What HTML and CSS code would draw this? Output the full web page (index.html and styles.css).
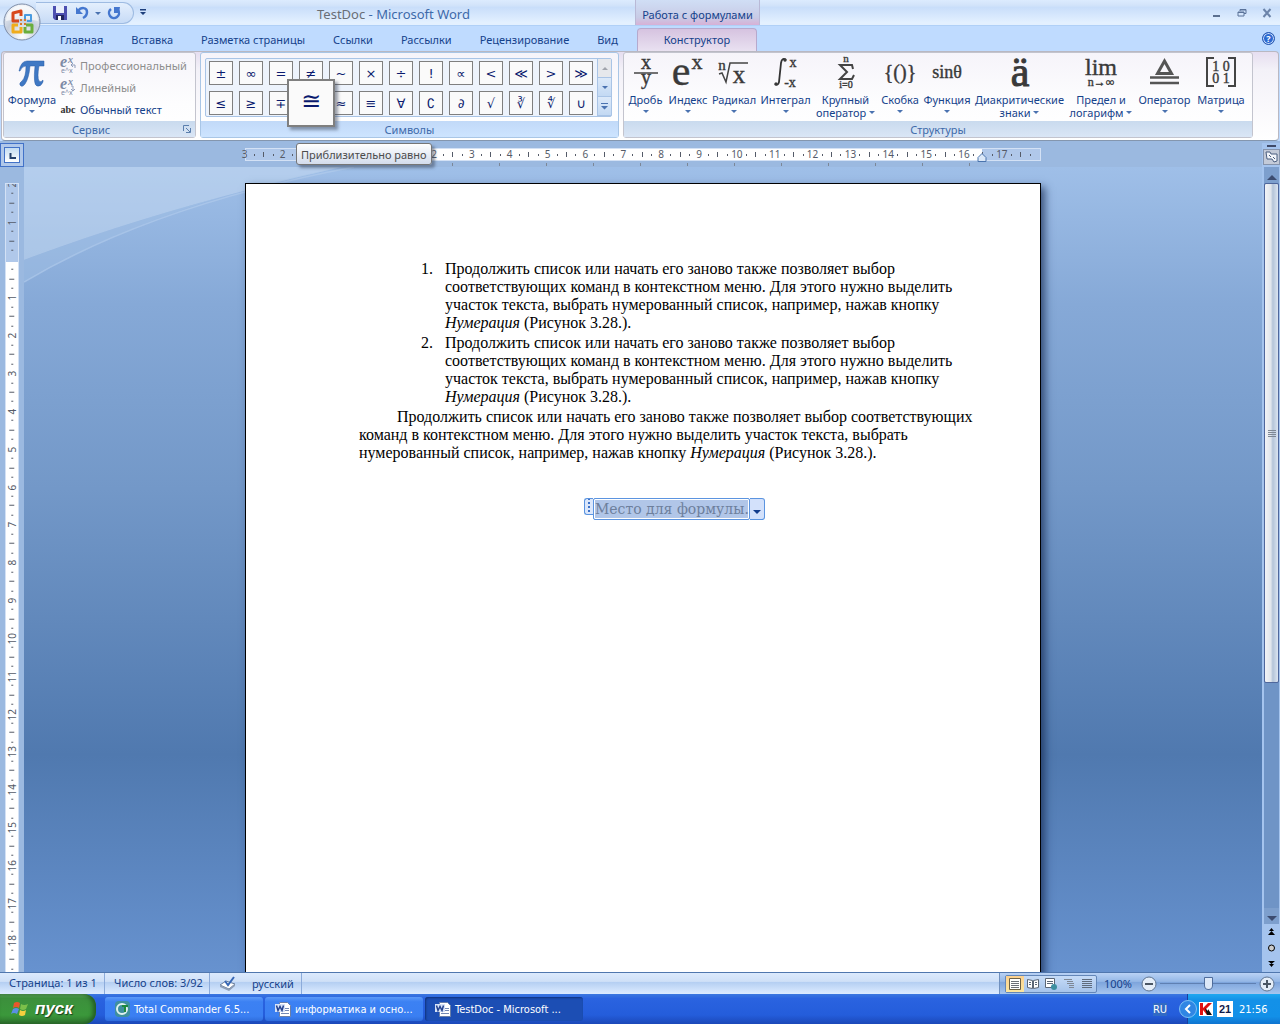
FILE: index.html
```html
<!DOCTYPE html>
<html lang="ru">
<head>
    <meta charset="UTF-8">
    <title>TestDoc - Microsoft Word</title>
    <link rel="stylesheet" href="styles.css">
</head>
<body>
<button class="office-button" aria-label="Office">
    <svg width="38" height="38" viewBox="0 0 38 38">
        <defs>
            <radialGradient id="orb" cx="50%" cy="90%" r="90%">
                <stop offset="0" stop-color="#ffffff"/>
                <stop offset="0.5" stop-color="#c5cedc"/>
                <stop offset="1" stop-color="#f6f8fb"/>
            </radialGradient>
        </defs>
        <circle cx="19" cy="19" r="18" fill="url(#orb)" stroke="#7d8da8"/>
        <path d="M3 18a16 15 0 0 1 32 0q-16-4-32 0z" fill="#fff" opacity=".6"/>
        <g fill="none" stroke-width="3" stroke-linejoin="round">
            <path d="M16 18h-6v-8l8-2v5" stroke="#d8481c"/>
            <path d="M22 18v-6h6v6h-4" stroke="#4a9be0" stroke-width="2"/>
            <path d="M15 22h-5v7h8v-5" stroke="#f0ac1c"/>
            <path d="M23 22h6v7h-7v-5" stroke="#6aae3c"/>
        </g>
        <path d="M17 16h2v2h-2zM21 16h2v2h-2zM17 20h2v2h-2zM21 20h2v2h-2z" fill="#d9792a"/>
    </svg>
</button>

<header class="titlebar">
    <div class="quick-access">
        <button aria-label="Сохранить">
            <svg width="14" height="14" viewBox="0 0 14 14"><path d="M0 0h14v14H2l-2-2z" fill="#4c4fb0"/><path d="M3 0h8v7H3z" fill="#e9eefb"/><path d="M3 9h8v5H3z" fill="#20255e"/><path d="M5 10h3v4H5z" fill="#fff"/></svg>
        </button>
        <button aria-label="Отменить">
            <svg width="14" height="14" viewBox="0 0 14 14"><path d="M1 1v7h7z" fill="#4577cf"/><path d="M3 5C6 1 12 1 12 6q0 4-4 6" fill="none" stroke="#4577cf" stroke-width="2.500"/></svg>
        </button>
        <i class="arrow"></i>
        <button aria-label="Повторить">
            <svg width="14" height="14" viewBox="0 0 14 14"><path d="M4 3a5 5 0 1 0 7 1" fill="none" stroke="#4577cf" stroke-width="2.500"/><path d="M7 1h6l-1 6H7z" fill="#4577cf"/></svg>
        </button>
    </div>
    <button class="customize" aria-label="Настройка панели">
        <svg width="6" height="7" viewBox="0 0 6 7"><path d="M0 0h6v1.500H0zM0 3h6L3 6z" fill="#1e3f7c"/></svg>
    </button>
    <h1><span>TestDoc</span> - Microsoft Word</h1>
    <div class="context-title">Работа с формулами</div>
    <div class="window-buttons">
        <button aria-label="Свернуть"><svg width="10" height="10" viewBox="0 0 10 10"><path d="M1 7h7v2H1z" fill="#5b6f8f"/></svg></button>
        <button aria-label="Восстановить"><svg width="10" height="10" viewBox="0 0 10 10"><path d="M3 3V1.500h6v4H7M1 4h6v4H1zM1 4.500h6M3 2h6" fill="none" stroke="#5b7299"/></svg></button>
        <button aria-label="Закрыть"><svg width="10" height="10" viewBox="0 0 10 10"><path d="M1.500 1l7 8M8.500 1l-7 8" stroke="#6c84aa" stroke-width="2"/></svg></button>
    </div>
</header>

<nav class="tabs">
    <button>Главная</button>
    <button>Вставка</button>
    <button>Разметка страницы</button>
    <button>Ссылки</button>
    <button>Рассылки</button>
    <button>Рецензирование</button>
    <button>Вид</button>
    <button class="active">Конструктор</button>
    <button class="help" aria-label="Справка">?</button>
</nav>

<section class="ribbon">
    <div class="group tools">
        <div class="group-body">
            <button class="big">
                <svg width="34" height="34" viewBox="0 0 34 34"><path d="M4 15Q6 5 12 5h17v5h-5q-2 11 0 15 2 2 4-1v2q-2 5-6 4-4-1-2-20h-5q-1 12-5 18-3 4-5 1-1-2 2-4 4-4 4-15-4 0-6 5z" fill="#3f78c4" stroke="#2b5ca4" stroke-width=".5"/></svg>
                <span>Формула</span>
                <i class="arrow"></i>
            </button>
            <div class="modes">
                <button disabled><svg width="16" height="18" viewBox="0 0 16 18"><text x="0" y="11" class="ex">e</text><text x="8" y="7" class="ex-sup">x</text><text x="1" y="17" class="ex-line">e^x</text><path d="M15 12V9h-4l2-2m-2 2l2 2" fill="none" stroke="#8f9dbb"/></svg>Профессиональный</button>
                <button disabled><svg width="16" height="18" viewBox="0 0 16 18"><text x="0" y="11" class="ex">e</text><text x="8" y="7" class="ex-sup">x</text><text x="1" y="17" class="ex-line">e^x</text><path d="M11 8h2v5m-2-2l2 2 2-2" fill="none" stroke="#8f9dbb"/></svg>Линейный</button>
                <button><b>abc</b>Обычный текст</button>
            </div>
        </div>
        <h2>Сервис<svg width="8" height="8" viewBox="0 0 8 8"><path d="M.5 6V.5H6M3 3l4 4M7.500 3v4.500H3" fill="none" stroke="#5b7fae"/></svg></h2>
    </div>

    <div class="group symbols">
        <div class="group-body">
            <div class="gallery">
                <div class="cells">
                    <button>±</button><button>∞</button><button>=</button><button>≠</button><button>~</button><button>×</button><button>÷</button><button>!</button><button>∝</button><button>&lt;</button><button>≪</button><button>&gt;</button><button>≫</button>
                    <button>≤</button><button>≥</button><button>∓</button><button class="hovered"><span>≅</span></button><button>≈</button><button>≡</button><button>∀</button><button>∁</button><button>∂</button><button>√</button><button>∛</button><button>∜</button><button>∪</button>
                </div>
                <div class="gallery-scroll">
                    <button disabled aria-label="Вверх"><i class="arrow up"></i></button>
                    <button aria-label="Вниз"><i class="arrow"></i></button>
                    <button aria-label="Ещё"><svg width="7" height="7" viewBox="0 0 7 7"><path d="M0 0h7v1H0zM0 3h7L3.500 6.500z" fill="#4a72b0"/></svg></button>
                </div>
            </div>
        </div>
        <h2>Символы</h2>
        <div class="tooltip" role="tooltip">Приблизительно равно</div>
    </div>

    <div class="group structures">
        <div class="group-body">
            <button class="big">
                <svg width="36" height="34" viewBox="0 0 36 34"><text x="18" y="13" font-size="20">x</text><path d="M6 17h24" stroke="#444" stroke-width="1.500"/><text x="18" y="28" font-size="20">y</text></svg>
                <span>Дробь</span><i class="arrow"></i>
            </button>
            <button class="big">
                <svg width="36" height="34" viewBox="0 0 36 34"><text x="11" y="29" font-size="42">e</text><text x="27" y="13" font-size="22">x</text></svg>
                <span>Индекс</span><i class="arrow"></i>
            </button>
            <button class="big">
                <svg width="36" height="34" viewBox="0 0 36 34"><text x="6" y="14" font-size="15">n</text><text x="23" y="27" font-size="25">x</text><path d="M3 18l3-1 4 9 4-19h18" fill="none" stroke="#444" stroke-width="1.500"/></svg>
                <span>Радикал</span><i class="arrow"></i>
            </button>
            <button class="big">
                <svg width="36" height="34" viewBox="0 0 36 34"><path d="M18 4q-4-3-5 3l-2 19q-1 4-4 2" fill="none" stroke="#333" stroke-width="1.800"/><circle cx="17" cy="4" r="1.500"/><circle cx="8" cy="28" r="1.500"/><text x="25" y="11" font-size="14">x</text><text x="22" y="31" font-size="14">-x</text></svg>
                <span>Интеграл</span><i class="arrow"></i>
            </button>
            <button class="big">
                <svg width="36" height="34" viewBox="0 0 36 34"><text x="18" y="6" font-size="11">n</text><path d="M25 13l-1-4H12l7 7-7 7h12l2-4" fill="none" stroke="#444" stroke-width="2"/><text x="18" y="32" font-size="10">i=0</text></svg>
                <span>Крупный<br>оператор <i class="arrow"></i></span>
            </button>
            <button class="big">
                <svg width="36" height="34" viewBox="0 0 36 34"><text x="18" y="23" font-size="20">{()}</text></svg>
                <span>Скобка</span><i class="arrow"></i>
            </button>
            <button class="big">
                <svg width="36" height="34" viewBox="0 0 36 34"><text x="18" y="22" font-size="18">sinθ</text></svg>
                <span>Функция</span><i class="arrow"></i>
            </button>
            <button class="big">
                <svg width="36" height="34" viewBox="0 0 36 34"><text x="18" y="30" font-size="42" stroke-width="1">ä</text></svg>
                <span>Диакритические<br>знаки <i class="arrow"></i></span>
            </button>
            <button class="big">
                <svg width="36" height="34" viewBox="0 0 36 34"><text x="18" y="19" font-size="24">lim</text><text x="18" y="30" font-size="12">n→∞</text></svg>
                <span>Предел и<br>логарифм <i class="arrow"></i></span>
            </button>
            <button class="big">
                <svg width="36" height="34" viewBox="0 0 36 34"><path d="M17.500 5l7 12.500h-14z" fill="none" stroke="#555" stroke-width="3"/><path d="M3 21.500h29M3 27h29" stroke="#555" stroke-width="2.500"/></svg>
                <span>Оператор</span><i class="arrow"></i>
            </button>
            <button class="big">
                <svg width="36" height="34" viewBox="0 0 36 34"><path d="M11 2H4v28h7M25 2h7v28h-7" fill="none" stroke="#444" stroke-width="2"/><text x="18" y="15" font-size="14">1 0</text><text x="18" y="27" font-size="14">0 1</text></svg>
                <span>Матрица</span><i class="arrow"></i>
            </button>
        </div>
        <h2>Структуры</h2>
    </div>
</section>

<div class="ruler-row">
    <button class="tab-selector" aria-label="Позиция табуляции"><svg width="14" height="14" viewBox="0 0 14 14"><path d="M5.500 5v5H11" fill="none" stroke="#24406b" stroke-width="2"/></svg></button>
    <div class="ruler-area">
        <div class="h-ruler">
            <div class="h-white"></div>
            <div class="h-marks" id="h-marks"></div>
            <svg class="indent" width="10" height="9" viewBox="0 0 10 9"><path d="M5 .5l4 4v4H1v-4z" fill="#dbe8f8" stroke="#4a74ae"/></svg>
        </div>
    </div>
    <div class="ruler-end">
        <div class="split"></div>
        <button aria-label="Линейка"><svg width="14" height="12" viewBox="0 0 14 12"><path d="M1 1h4l1 2h6v7l-3 1-2-3H2z" fill="#f2f5fa" stroke="#4b5f80"/><path d="M4 4l2 2M8 6l2 2" stroke="#4b5f80"/></svg></button>
    </div>
</div>

<main class="workspace">
    <div class="v-side">
        <div class="v-ruler">
            <div class="v-marks" id="v-marks"></div>
        </div>
    </div>
    <div class="canvas">
        <svg class="wave" width="340" height="116" viewBox="0 0 340 116">
            <path d="M0 0H318Q140 40 0 93z" fill="#cfe1f5" opacity=".45"/>
            <path d="M318 0Q140 40 0 93V115Q130 38 318 0z" fill="#a4c3e6" opacity=".4"/>
            <path d="M0 115Q130 38 330 0" fill="none" stroke="#b4cdec" stroke-width="1.500" opacity=".6"/>
        </svg>
        <article class="sheet">
            <ol>
                <li><div>Продолжить список или начать его заново также позволяет выбор<br>соответствующих команд в контекстном меню. Для этого нужно выделить<br>участок текста, выбрать нумерованный список, например, нажав кнопку<br><em>Нумерация</em> (Рисунок 3.28.).</div></li>
                <li><div>Продолжить список или начать его заново также позволяет выбор<br>соответствующих команд в контекстном меню. Для этого нужно выделить<br>участок текста, выбрать нумерованный список, например, нажав кнопку<br><em>Нумерация</em> (Рисунок 3.28.).</div></li>
            </ol>
            <p>Продолжить список или начать его заново также позволяет выбор соответствующих<br>команд в контекстном меню. Для этого нужно выделить участок текста, выбрать<br>нумерованный список, например, нажав кнопку <em>Нумерация</em> (Рисунок 3.28.).</p>
            <div class="formula">
                <span class="grip"></span>
                <input type="text" value="Место для формулы." aria-label="Формула">
                <button aria-label="Параметры формулы"><i class="arrow"></i></button>
            </div>
        </article>
    </div>
    <div class="scrollbar">
        <button aria-label="Вверх"><i class="arrow up"></i></button>
        <div class="track"><div class="thumb"></div></div>
        <button aria-label="Вниз"><i class="arrow"></i></button>
        <button class="browse" aria-label="Предыдущая страница"><svg width="7" height="8" viewBox="0 0 7 8"><path d="M3.500 0L6 3H1zM3.500 3L7 7H0z"/></svg></button>
        <button class="browse" aria-label="Выбор объекта"><svg width="7" height="8" viewBox="0 0 7 8"><circle cx="3.500" cy="4" r="3" fill="#ccc" stroke="#000"/></svg></button>
        <button class="browse" aria-label="Следующая страница"><svg width="7" height="8" viewBox="0 0 7 8"><path d="M0 1h7L3.500 4zM1 4h5L3.500 7z"/></svg></button>
    </div>
</main>

<footer class="status">
    <span class="pages">Страница: 1 из 1</span>
    <span class="words">Число слов: 3/92</span>
    <span class="lang">
        <svg width="17" height="15" viewBox="0 0 17 15"><path d="M1 9l6-4 9 3-6 5z" fill="#fff" stroke="#6b7f9d"/><path d="M1 9v2l9 4 6-5V8l-6 5z" fill="#8d9db5"/><path d="M6 5l3 4 6-8" fill="none" stroke="#3767b5" stroke-width="2"/></svg>
        русский
    </span>
    <div class="status-right">
        <div class="views">
            <button class="active" aria-label="Разметка страницы"><svg width="12" height="12" viewBox="0 0 12 12"><path d="M.5.500h11v11H.5z" fill="#fff" stroke="#6b6146"/><path d="M2 3.500h8M2 5.500h8M2 7.500h8M2 9.500h8" stroke="#6b6f78"/></svg></button>
            <button aria-label="Режим чтения"><svg width="12" height="12" viewBox="0 0 12 12"><path d="M.5 1.500l5 1v8l-5-1zM11.500 1.500l-5 1v8l5-1z" fill="#fff" stroke="#5b6675"/><path d="M2 4.500h2M2 6.500h2M8 4.500h2M8 6.500h2" stroke="#5b6675"/></svg></button>
            <button aria-label="Веб-документ"><svg width="12" height="12" viewBox="0 0 12 12"><path d="M.5.500h9v9h-9z" fill="#fff" stroke="#5b6675"/><path d="M2 3.500h6M2 5.500h6" stroke="#5b6675"/><circle cx="9" cy="9" r="3" fill="#3d8fa0"/></svg></button>
            <button aria-label="Структура"><svg width="12" height="12" viewBox="0 0 12 12"><path d="M1 1.500h8M4 3.500h6M4 5.500h7M6 7.500h5M6 9.500h5" stroke="#7e8794"/></svg></button>
            <button aria-label="Черновик"><svg width="12" height="12" viewBox="0 0 12 12"><path d="M1 1.500h10M1 3.500h10M1 5.500h10M1 7.500h10M1 9.500h10" stroke="#5f6b7c"/></svg></button>
        </div>
        <label for="zoom">100%</label>
        <button class="round" aria-label="Уменьшить"><svg width="16" height="16" viewBox="0 0 16 16"><circle cx="8" cy="8" r="7" fill="#e4edf8" stroke="#5f7491"/><path d="M4 8h8" stroke="#4a5664" stroke-width="2"/></svg></button>
        <input type="range" id="zoom" min="0" max="200" value="100">
        <button class="round" aria-label="Увеличить"><svg width="16" height="16" viewBox="0 0 16 16"><circle cx="8" cy="8" r="7" fill="#e4edf8" stroke="#5f7491"/><path d="M4 8h8M8 4v8" stroke="#4a5664" stroke-width="2"/></svg></button>
    </div>
</footer>

<div class="taskbar">
    <button class="start">
        <svg width="18" height="18" viewBox="0 0 18 18"><path d="M3 3q3-2 6 0L8 8Q5 6 2 8z" fill="#e8572c"/><path d="M10 4q3 2 7 0l-2 5q-3 2-6 0z" fill="#7cc04a"/><path d="M2 9q3-2 6 0l-2 5q-3-2-6 0z" fill="#5a8fe6"/><path d="M9 10q3 2 6 0l-1 5q-3 2-6 0z" fill="#f6cf3e"/></svg>
        пуск
    </button>
    <button class="task">
        <svg width="15" height="16" viewBox="0 0 15 16"><rect width="15" height="16" rx="4" fill="#3f8f9e"/><circle cx="7" cy="8" r="5" fill="none" stroke="#dff2ee" stroke-width="2"/><path d="M7 5h6M10 5v6" stroke="#1f8a3c" stroke-width="2"/></svg>
        Total Commander 6.5...
    </button>
    <button class="task">
        <svg width="16" height="16" viewBox="0 0 16 16"><path d="M4.500 1.500h8l3 3v11h-11z" fill="#fff" stroke="#6a7fa8"/><path d="M10 7.500h4M10 9.500h4M6 12.500h8" stroke="#7389b5"/><path d="M0 3h10v8H0z" fill="#d6e2f8"/><path d="M1.500 4.500l1.500 5 2-4 2 4 1.500-5" fill="none" stroke="#23418f" stroke-width="1.500"/></svg>
        информатика и осно...
    </button>
    <button class="task active">
        <svg width="16" height="16" viewBox="0 0 16 16"><path d="M4.500 1.500h8l3 3v11h-11z" fill="#fff" stroke="#6a7fa8"/><path d="M10 7.500h4M10 9.500h4M6 12.500h8" stroke="#7389b5"/><path d="M0 3h10v8H0z" fill="#d6e2f8"/><path d="M1.500 4.500l1.500 5 2-4 2 4 1.500-5" fill="none" stroke="#23418f" stroke-width="1.500"/></svg>
        TestDoc - Microsoft ...
    </button>
    <span class="keyboard">RU</span>
    <div class="tray">
        <button class="expand" aria-label="Показать значки"><svg width="18" height="18" viewBox="0 0 18 18"><circle cx="9" cy="9" r="8.500" fill="#2f86e4" stroke="#7cc0f4"/><path d="M11 5L7 9l4 4" fill="none" stroke="#fff" stroke-width="2"/></svg></button>
        <svg width="14" height="14" viewBox="0 0 14 14"><path d="M0 0h14v14H0z" fill="#fff"/><path d="M1 1h3v5l5-5h4L7 7l4 6H8L4 8v5H1z" fill="#e01010"/><path d="M6 6l3 3V7l4 6H8z" fill="#111"/></svg>
        <span class="date">21</span>
        <time>21:56</time>
    </div>
</div>

<script>
    // four marks per centimetre: number, dot, line, dot
    function drawMarks(id, from, count) {
        const box = document.getElementById(id);
        for (let i = 0; i < count * 4; i++) {
            const mark = document.createElement('span');
            const cm = Math.abs(from + i / 4);
            if (i % 4 === 0) {
                mark.textContent = cm === 0 ? '' : cm;
            } else {
                mark.className = i % 4 === 2 ? 'line' : 'dot';
            }
            box.appendChild(mark);
        }
    }

    drawMarks('h-marks', -3, 21);
    drawMarks('v-marks', -2, 28);
</script>
</body>
</html>
```
FILE: styles.css
```css
* {
    box-sizing: border-box;
}

body {
    display: flex;
    flex-direction: column;
    height: 100vh;
    margin: 0;
    overflow: hidden;
    position: relative;
    background: #bfdbff;
    color: #15428b;
    font-family: "Noto Sans", "Open Sans", sans-serif;
    font-size: 11px;
    line-height: 13px;
}

button {
    margin: 0;
    padding: 0;
    border: 0;
    background: none;
    color: inherit;
    font: inherit;
    white-space: nowrap;
}

svg {
    display: block;
    flex: none;
    overflow: visible;
}

h1, h2 {
    margin: 0;
    font-weight: normal;
}

.arrow {
    display: inline-block;
    flex: none;
    width: 0;
    height: 0;
    border: 3px solid transparent;
    border-top-color: #4a72b0;
    border-bottom: 0;
}

.arrow.up {
    border-top: 0;
    border-bottom: 3px solid #a0a4ac;
}

/* title */
.office-button {
    position: absolute;
    left: 3px;
    top: 3px;
    z-index: 2;
}

.titlebar {
    display: flex;
    flex: none;
    height: 26px;
    background: linear-gradient(#dcebfe 0, #d3e4fa 20%, #c9defa 30%, #e3f0ff 90%);
    border-bottom: 1px solid #b0d0f7;
}

.quick-access {
    display: flex;
    align-items: center;
    gap: 6px;
    width: 98px;
    height: 22px;
    margin: 2px 0 0 36px;
    padding-left: 17px;
    border: 1px solid #9ebbe2;
    border-left: 0;
    border-radius: 0 11px 11px 0;
    background: linear-gradient(#e4effd, #c7dbf6);
}

.quick-access button:first-child {
    margin-right: 2px;
}

.customize {
    width: 18px;
    padding-left: 6px;
}

.titlebar h1 {
    flex: 0 0 483px;
    color: #3e6aaa;
    font-size: 13px;
    line-height: 28px;
    text-align: center;
}

.titlebar h1 span {
    color: #696e76;
}

.context-title {
    width: 125px;
    border: solid #b9b9d6;
    border-width: 0 1px;
    background: linear-gradient(#d0def5, #c8cbe6 70%, #d7b1d6);
    line-height: 30px;
    text-align: center;
}

.window-buttons {
    display: flex;
    align-items: center;
    gap: 15px;
    margin-left: auto;
    padding-right: 8px;
}

/* tabs */
.tabs {
    display: flex;
    flex: none;
    height: 25px;
    padding-left: 46px;
    line-height: 28px;
}

.tabs button {
    padding: 0 14px;
}

.tabs .active {
    width: 120px;
    height: 23px;
    margin: 2px 0 0 5px;
    border: 1px solid #b6a9cd;
    border-bottom: 0;
    border-radius: 4px 4px 0 0;
    background: linear-gradient(#d6c3e0, #e9e1f1);
    line-height: 22px;
}

.tabs .help {
    width: 13px;
    height: 13px;
    margin: 6px 5px 0 auto;
    padding: 0;
    border: 1px solid #2858b0;
    border-radius: 50%;
    background: #2c68d0;
    box-shadow: inset 0 0 0 1px #c5dafa;
    color: #fff;
    font-weight: bold;
    font-size: 9px;
    line-height: 11px;
}

/* ribbon */
.ribbon {
    display: flex;
    flex: none;
    gap: 4px;
    height: 90px;
    margin: 0 1px;
    padding: 0 2px 2px 1px;
    border: 1px solid #b9b8c2;
    border-bottom: 1px solid #8496ae;
    border-radius: 4px;
    background: linear-gradient(#e6def0, #f3f1f8 20%, #fff);
}

.group {
    display: flex;
    flex-direction: column;
    border: 1px solid #c3c4ce;
    border-radius: 3px;
    background: linear-gradient(#f6f4fa, #fdfdfe 60%, #fff);
}

.group h2 {
    height: 16px;
    margin-top: auto;
    background: linear-gradient(#c9daee, #dae6f6);
    color: #3e6aaa;
    font-size: 11px;
    line-height: 17px;
    text-align: center;
}

.tools {
    width: 193px;
}

.tools .group-body {
    display: flex;
}

.tools .big {
    width: 56px;
}

.tools h2 {
    display: flex;
    align-items: center;
    padding: 0 4px 0 68px;
}

.tools h2 svg {
    margin-left: auto;
}

.modes {
    display: flex;
    flex-direction: column;
    padding-top: 1px;
}

.modes button {
    display: flex;
    align-items: center;
    gap: 4px;
    height: 22px;
}

.modes button:disabled {
    color: #8d8d8d;
}

.modes b {
    width: 16px;
    color: #333;
    font-family: "Liberation Serif", serif;
    font-size: 10px;
}

.ex, .ex-sup {
    fill: #7e8aa6;
    font: italic bold 16px "Liberation Serif", serif;
}

.ex-sup {
    font-size: 10px;
}

.ex-line {
    fill: #7e8aa6;
    font-size: 7px;
}

.big {
    display: flex;
    flex-direction: column;
    align-items: center;
    height: 68px;
    padding-top: 3px;
}

.big > span {
    margin-top: 3px;
}

.big > .arrow {
    margin-top: 4px;
}

.big span .arrow {
    margin-bottom: 3px;
}

.symbols {
    position: relative;
    width: 419px;
    border-color: #a9c6e6;
}

.symbols h2 {
    background: linear-gradient(#c1d9f8, #cde4ff);
}

.gallery {
    display: flex;
    width: 407px;
    height: 59px;
    margin: 5px 0 0 4px;
    border: 1px solid #a9c4e6;
    border-radius: 2px;
    background: #edf3fc;
}

.cells {
    display: grid;
    grid-template-columns: repeat(13, 24px);
    grid-auto-rows: 24px;
    gap: 6px;
    flex: 1;
    padding: 2px 3px;
}

.cells button {
    position: relative;
    border: 1px solid #7f7f7f;
    background: #fafafa;
    color: #0a1a6e;
    font-family: "DejaVu Sans", sans-serif;
    font-size: 13px;
}

.cells .hovered span {
    position: absolute;
    left: -13px;
    top: -13px;
    z-index: 2;
    width: 48px;
    height: 48px;
    border: 2px solid #7f7f7f;
    background: #fafafa;
    box-shadow: 3px 3px 3px rgba(60, 70, 90, .5);
    font-size: 24px;
    line-height: 40px;
}

.gallery-scroll {
    display: grid;
    grid-template-rows: repeat(3, 1fr);
    width: 14px;
}

.gallery-scroll button {
    display: flex;
    align-items: center;
    justify-content: center;
    border: solid #a9c4e6;
    border-width: 0 0 1px 1px;
    background: linear-gradient(#dce9f9, #c3d9f3);
}

.gallery-scroll button:disabled {
    background: #e6e8ec;
}

.tooltip {
    position: absolute;
    left: 95px;
    top: 90px;
    z-index: 3;
    height: 22px;
    padding: 0 4px;
    border: 1px solid #767676;
    border-radius: 3px;
    background: linear-gradient(#fff, #d3dcec);
    box-shadow: 3px 3px 3px rgba(60, 70, 90, .5);
    color: #4c4c4c;
    line-height: 22px;
    white-space: nowrap;
}

.structures {
    width: 630px;
}

.structures .group-body {
    display: grid;
    grid-template-columns: 41px 44px 48px 55px 65px 44px 50px 95px 68px 59px 54px;
    padding-left: 1px;
}

.structures svg {
    fill: #3a3a3a;
    stroke: #3a3a3a;
    stroke-width: .4px;
    font-family: "Liberation Serif", serif;
    text-anchor: middle;
}

/* rulers */
.ruler-row {
    display: flex;
    flex: none;
    height: 26px;
    padding-top: 2px;
    background: #9bb9e0;
}

.tab-selector {
    width: 24px;
    height: 24px;
    padding: 4px;
    border: 1px solid #4272c8;
    background: #b0c8ea;
}

.tab-selector svg {
    background: linear-gradient(#c4dcf2, #fff);
    outline: 1px solid #4272c8;
}

.ruler-area {
    display: flex;
    justify-content: center;
    flex: 1;
    padding-top: 5px;
}

.h-ruler {
    position: relative;
    width: 796px;
    height: 13px;
    border: 1px solid #d3e1f5;
    background: #b0c8ea;
    color: #555b68;
    font-size: 10px;
    line-height: 11px;
}

.h-white {
    height: 11px;
    margin: 0 58px 0 113px;
    background: #fff;
}

/* default tab stops under the scale */
.h-white::after {
    content: "";
    position: absolute;
    left: 160px;
    right: 60px;
    top: 14px;
    height: 3px;
    background: repeating-linear-gradient(90deg, transparent 0, transparent 46px, #7c8797 46px, #7c8797 47px);
}

.h-marks {
    position: absolute;
    left: -6px;
    top: 0;
    display: grid;
    grid-template-columns: repeat(84, 1fr);
    width: 795px;
    height: 11px;
}

.h-marks span, .v-marks span {
    display: flex;
    align-items: center;
    justify-content: center;
    min-width: 0;
    min-height: 0;
}

.h-marks .line::after, .h-marks .dot::after {
    content: "";
    width: 1px;
    height: 5px;
    background: #555b68;
}

.h-marks .dot::after {
    height: 2px;
}

.indent {
    position: absolute;
    right: 53px;
    top: 4px;
}

.ruler-end {
    display: flex;
    flex-direction: column;
    width: 18px;
    background: #a5c4ee;
}

.split {
    width: 9px;
    height: 2px;
    margin: 2px auto 2px;
    background: #3f4a68;
}

.ruler-end button {
    width: 17px;
    height: 16px;
    margin-left: 1px;
    padding: 1px;
    border: 1px solid #8694ac;
    background: #c3cad8;
}

.workspace {
    display: flex;
    flex: 1;
    min-height: 0;
}

.v-side {
    width: 24px;
    padding: 16px 5px 0;
    background: #9bb9e0;
}

.v-ruler {
    height: 100%;
    overflow: hidden;
    border: 1px solid #d3e1f5;
    border-bottom: 0;
    background: linear-gradient(#b0c8ea 78px, #fff 78px);
    color: #555b68;
    font-size: 10px;
    line-height: 12px;
}

.v-marks {
    display: grid;
    grid-template-rows: repeat(112, 1fr);
    height: 1059px;
    margin-top: -4px;
}

.v-marks span {
    transform: rotate(-90deg);
}

.v-marks .line::after, .v-marks .dot::after {
    content: "";
    width: 1px;
    height: 5px;
    background: #555b68;
}

.v-marks .dot::after {
    height: 2px;
}

/* document */
.canvas {
    position: relative;
    display: flex;
    justify-content: center;
    flex: 1;
    overflow: hidden;
    background: linear-gradient(#9fbfe8, #86a9d7 17%, #7398c8 40%, #5079af 73%, #6792cf);
}

.wave {
    position: absolute;
    left: 0;
    top: 0;
}

.sheet {
    position: relative;
    width: 796px;
    height: 1123px;
    margin-top: 16px;
    padding: 76px 58px 0 113px;
    border: 1px solid #000;
    background: #fff;
    box-shadow: 4px 4px 8px rgba(20, 40, 80, .7);
    color: #000;
    font-family: "Liberation Serif", serif;
    font-size: 16px;
    line-height: 18px;
    white-space: nowrap;
}

.sheet ol {
    margin: 0;
    padding: 0 0 0 62px;
    counter-reset: item;
    list-style: none;
}

.sheet li {
    display: flex;
    margin-bottom: 2px;
    counter-increment: item;
}

.sheet li::before {
    content: counter(item) ".";
    width: 24px;
}

.sheet p {
    margin: 0;
    text-indent: 38px;
}

.formula {
    display: flex;
    width: 181px;
    height: 22px;
    margin: 36px 0 0 225px;
}

.formula .grip {
    width: 9px;
    height: 17px;
    border: 1px solid #5b94e0;
    border-right: 0;
    border-radius: 3px 0 0 3px;
    background: radial-gradient(circle, #3d72c8 1px, transparent 1px) 1px 2px / 6px 4px #dbe7fb;
}

.formula input {
    width: 157px;
    height: 22px;
    padding: 0 0 0 1px;
    border: 1px solid #5b94e0;
    border-radius: 2px;
    background: #b1c6e8;
    box-shadow: inset 0 0 0 1px #fff;
    color: #6d7f9c;
    font-family: "DejaVu Serif", serif;
    font-size: 14px;
}

.formula button {
    width: 15px;
    border: 1px solid #5b94e0;
    border-left: 0;
    border-radius: 0 3px 3px 0;
    background: #d3e1fb;
    line-height: 20px;
}

.formula .arrow {
    border-width: 4px 4px 0;
    border-top-color: #123c8c;
}

/* scrollbar */
.scrollbar {
    display: flex;
    flex-direction: column;
    width: 18px;
    padding: 0 1px 0 2px;
    background: #a5c4ee;
}

.scrollbar button {
    flex: none;
    height: 16px;
    background: #7d9fcd;
}

.scrollbar .arrow {
    border-width: 5px 5px 0;
    border-top-color: #3c4c70;
}

.scrollbar .arrow.up {
    border-width: 0 5px 5px;
    border-bottom-color: #3c4c70;
}

.track {
    flex: 1;
    background: #6f94c6;
}

.thumb {
    display: flex;
    align-items: center;
    justify-content: center;
    height: 69%;
    border: 1px solid #4f679c;
    border-radius: 2px;
    background: linear-gradient(90deg, #f2f3f6, #e0e5ec 45%, #b4c4d8 60%, #dbe4f0);
}

.thumb::after {
    content: "";
    width: 8px;
    height: 7px;
    background: repeating-linear-gradient(#7f8894 0, #7f8894 1px, transparent 1px, transparent 2px);
}

.scrollbar .browse {
    display: flex;
    align-items: center;
    justify-content: center;
    background: none;
}

/* status */
.status {
    display: flex;
    flex: none;
    height: 22px;
    border-top: 1px solid #5077ae;
    background: linear-gradient(#dceafd, #cfe0f7 40%, #b5cff2 45%, #cfe2fb 80%, #dcebff);
    line-height: 20px;
}

.status > span {
    padding-left: 9px;
    border-right: 1px solid #8cabda;
}

.pages {
    width: 105px;
}

.words {
    width: 105px;
}

.lang {
    display: flex;
    align-items: center;
    gap: 16px;
    width: 92px;
}

.status-right {
    display: flex;
    align-items: center;
    width: 281px;
    margin-left: auto;
    padding: 0 2px 0 5px;
    border-left: 1px solid #7090be;
    background: linear-gradient(#b9d2f5, #94b7e6 40%, #7ea5dc 45%, #a7c6ef);
}

.views {
    display: grid;
    grid-template-columns: repeat(5, 18px);
    height: 18px;
    border: 1px solid #6386b8;
    border-radius: 2px;
    background: linear-gradient(#c6dbf7, #a6c3ea);
}

.views button {
    padding: 2px 3px;
}

.views .active {
    background: linear-gradient(#fbd08e, #fbe6a0);
}

.status label {
    width: 35px;
    margin-right: 6px;
    text-align: right;
}

.status .round {
    padding: 0 3px;
}

#zoom {
    flex: 1;
    min-width: 0;
    height: 14px;
    margin: 0;
    appearance: none;
    background: linear-gradient(#5f80b2, #5f80b2) center / 100% 1px no-repeat;
}

#zoom::-webkit-slider-thumb {
    appearance: none;
    width: 9px;
    height: 13px;
    border: 1px solid #4f6d9c;
    border-radius: 1px 1px 5px 5px;
    background: #dce8f8;
}

/* taskbar */
.taskbar {
    display: flex;
    align-items: center;
    flex: none;
    height: 30px;
    background: linear-gradient(#3b78e0, #2a63e0 15%, #245ddb 70%, #1b48b8);
    color: #fff;
    font-family: "DejaVu Sans Condensed", "DejaVu Sans", sans-serif;
    font-size: 11px;
}

.start {
    display: flex;
    align-items: center;
    gap: 6px;
    width: 96px;
    height: 30px;
    margin-right: 9px;
    padding-left: 11px;
    border-radius: 0 12px 12px 0;
    background: linear-gradient(#5ca45c, #3c8f3c 15%, #3b983b 70%, #2c6f2c);
    box-shadow: inset -3px 0 4px #235c23;
    font: italic bold 17px "Liberation Sans", sans-serif;
    text-shadow: 1px 1px 1px #1c3f1c;
}

.task {
    display: flex;
    align-items: center;
    gap: 4px;
    width: 158px;
    height: 24px;
    margin-right: 2px;
    padding-left: 10px;
    border-radius: 3px;
    background: linear-gradient(#5c9af8, #3c81f3 20%, #3a7ff2 80%, #2f6ddc);
}

.task.active {
    background: #1c4eb4;
    box-shadow: inset 1px 1px 2px #10337c;
}

.keyboard {
    margin-left: auto;
    margin-right: 20px;
    background: #316ac5;
}

.tray {
    display: flex;
    align-items: center;
    gap: 4px;
    width: 93px;
    height: 30px;
    border-left: 1px solid #1b3f9c;
    background: linear-gradient(#1fa8f0, #1391e8 20%, #1290e8 75%, #0f74d0);
}

.tray .expand {
    margin: 0 -2px 0 -9px;
}

.date {
    width: 16px;
    height: 16px;
    background: #fff;
    color: #111d4a;
    font: bold 11px "Liberation Sans", sans-serif;
    line-height: 16px;
    text-align: center;
}

.tray time {
    margin-left: 2px;
}
```
